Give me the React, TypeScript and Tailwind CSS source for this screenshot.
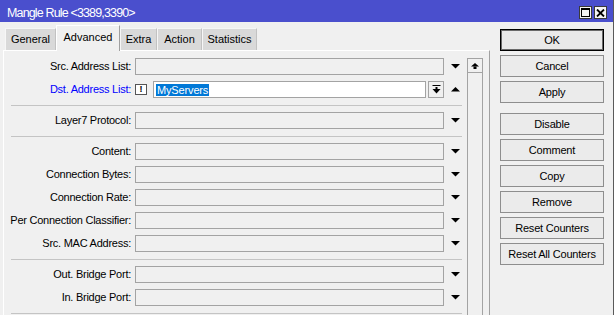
import React from "react";

const Down = () => (
  <svg width="9" height="5" viewBox="0 0 9 5">
    <polygon points="0,0 9,0 4.5,4.5" fill="#000" />
  </svg>
);
const Up = () => (
  <svg width="9" height="5" viewBox="0 0 9 5">
    <polygon points="0,4.5 9,4.5 4.5,0" fill="#000" />
  </svg>
);

function Label({ text, blue }: { text: string; blue?: boolean }) {
  return (
    <div
      className={`w-[127px] shrink-0 whitespace-nowrap text-right text-[11px] leading-[13px] tracking-[-0.25px] ${
        blue ? "text-[#0000ff]" : "text-black"
      }`}
    >
      {text}
    </div>
  );
}

function Row({ label }: { label: string }) {
  return (
    <div className="flex h-[23px] items-center">
      <Label text={label} />
      <div className="ml-[4px] h-[17px] w-[309px] border border-[#a3a3a3] bg-[#f0f0f0]" />
      <div className="flex w-[22px] justify-center">
        <Down />
      </div>
    </div>
  );
}

function Sep() {
  return (
    <div className="h-[8px] pt-[4px]">
      <div className="ml-[7px] h-px w-[451px] bg-[#c4c4c4]" />
    </div>
  );
}

function Btn({ text, def }: { text: string; def?: boolean }) {
  return (
    <div
      className={`flex h-[22px] w-[104px] items-center justify-center text-[11px] tracking-[-0.2px] text-black ${
        def
          ? "border border-black bg-[#e9e9e9] shadow-[inset_0_0_0_1px_#6a6a6a]"
          : "border border-[#8e8e8e] bg-[#ebebeb]"
      }`}
    >
      {text}
    </div>
  );
}

function Tab({ text, w, active }: { text: string; w: number; active?: boolean }) {
  if (active) {
    return (
      <div
        style={{ width: w }}
        className="relative z-10 -mb-px flex h-[26px] items-center justify-center border-l border-t border-r border-l-white border-t-white border-r-[#a0a0a0] bg-[#f0f0f0] pb-[3px] text-[11px] text-black"
      >
        {text}
      </div>
    );
  }
  return (
    <div
      style={{ width: w }}
      className="flex h-[22px] items-center justify-center border-l border-t border-r border-l-[#f6f6f6] border-t-[#f6f6f6] border-r-[#c2c2c2] bg-[#d9d9d9] text-[11px] text-black"
    >
      {text}
    </div>
  );
}

export default function App() {
  return (
    <div className="flex h-[315px] w-[614px] flex-col overflow-hidden border-r border-[#5a5a5a] bg-[#f0f0f0] font-['Liberation_Sans',Arial,sans-serif]">
      {/* Title bar */}
      <div className="flex h-[22px] shrink-0 items-start bg-[#4a4fcd]">
        <div className="pl-[7px] pt-[6px] text-[12.5px] leading-[15px] tracking-[-0.85px] text-white">
          Mangle Rule &lt;3389,3390&gt;
        </div>
        <div className="ml-auto mr-[6px] mt-[6px] flex gap-[2px]">
          <div className="flex h-[13px] w-[13px] items-center justify-center border border-[#3a3a3a] bg-[#f4f4f4]">
            <svg width="9" height="9" viewBox="0 0 9 9">
              <rect x="0.5" y="0.5" width="8" height="8" fill="none" stroke="#000" />
              <rect x="0" y="0" width="9" height="2" fill="#000" />
            </svg>
          </div>
          <div className="flex h-[13px] w-[13px] items-center justify-center border border-[#3a3a3a] bg-[#f4f4f4]">
            <svg width="9" height="8" viewBox="0 0 9 8">
              <path d="M1 0.5 L8 7.5 M8 0.5 L1 7.5" stroke="#000" strokeWidth="1.8" />
            </svg>
          </div>
        </div>
      </div>

      {/* Body */}
      <div className="flex min-h-0 flex-1">
        {/* Left: tabs + panel */}
        <div className="flex w-[490px] flex-col pl-[3px] pt-[3px]">
          <div className="flex h-[25px] items-end pl-[2px]">
            <Tab text="General" w={51} />
            <Tab text="Advanced" w={64} active />
            <Tab text="Extra" w={37} />
            <Tab text="Action" w={45} />
            <Tab text="Statistics" w={55} />
          </div>
          <div className="flex min-h-0 w-[487px] flex-1 border-l border-t border-r border-l-white border-t-white border-r-[#a0a0a0]">
            <div className="w-[463px] pt-[4px]">
              <Row label="Src. Address List:" />
              <div className="flex h-[23px] items-center">
                <Label text="Dst. Address List:" blue />
                <div className="ml-[4px] flex h-[11px] w-[12px] items-center justify-center border border-[#555] bg-white text-[9px] font-bold leading-none text-black">
                  !
                </div>
                <div className="ml-[6px] flex h-[17px] w-[273px] items-center border border-[#a3a3a3] bg-white pl-[2px]">
                  <span className="bg-[#0078d7] px-[1px] text-[11px] leading-[12px] tracking-[-0.15px] text-white">
                    MyServers
                  </span>
                </div>
                <div className="ml-[2px] flex h-[17px] w-[16px] items-center justify-center border border-[#a3a3a3] bg-[#f0f0f0]">
                  <svg width="9" height="9" viewBox="0 0 9 9">
                    <rect x="0.5" y="0" width="8" height="1" fill="#000" />
                    <rect x="3.5" y="2" width="2" height="2.5" fill="#000" />
                    <polygon points="0.5,4 8.5,4 4.5,8.5" fill="#000" />
                  </svg>
                </div>
                <div className="flex w-[22px] justify-center">
                  <Up />
                </div>
              </div>
              <Sep />
              <Row label="Layer7 Protocol:" />
              <Sep />
              <Row label="Content:" />
              <Row label="Connection Bytes:" />
              <Row label="Connection Rate:" />
              <Row label="Per Connection Classifier:" />
              <Row label="Src. MAC Address:" />
              <Sep />
              <Row label="Out. Bridge Port:" />
              <Row label="In. Bridge Port:" />
              <Sep />
            </div>
            {/* scrollbar */}
            <div className="mt-[7px] flex w-[16px] flex-col">
              <div className="flex h-[15px] items-center justify-center border border-[#a3a3a3] bg-[#f0f0f0]">
                <svg width="8" height="6" viewBox="0 0 8 6">
                  <polygon points="4,0 8,3.5 0,3.5" fill="#000" />
                  <rect x="2.5" y="3.5" width="3" height="2.5" fill="#000" />
                </svg>
              </div>
              <div className="flex-1 border-x border-[#a3a3a3] bg-[#f0f0f0]" />
            </div>
          </div>
        </div>

        {/* Right: buttons */}
        <div className="ml-[10px] flex w-[104px] flex-col pt-[7px]">
          <div className="flex flex-col gap-[4px]">
            <Btn text="OK" def />
            <Btn text="Cancel" />
            <Btn text="Apply" />
          </div>
          <div className="mt-[10px] flex flex-col gap-[4px]">
            <Btn text="Disable" />
            <Btn text="Comment" />
            <Btn text="Copy" />
            <Btn text="Remove" />
            <Btn text="Reset Counters" />
            <Btn text="Reset All Counters" />
          </div>
        </div>
      </div>
    </div>
  );
}
